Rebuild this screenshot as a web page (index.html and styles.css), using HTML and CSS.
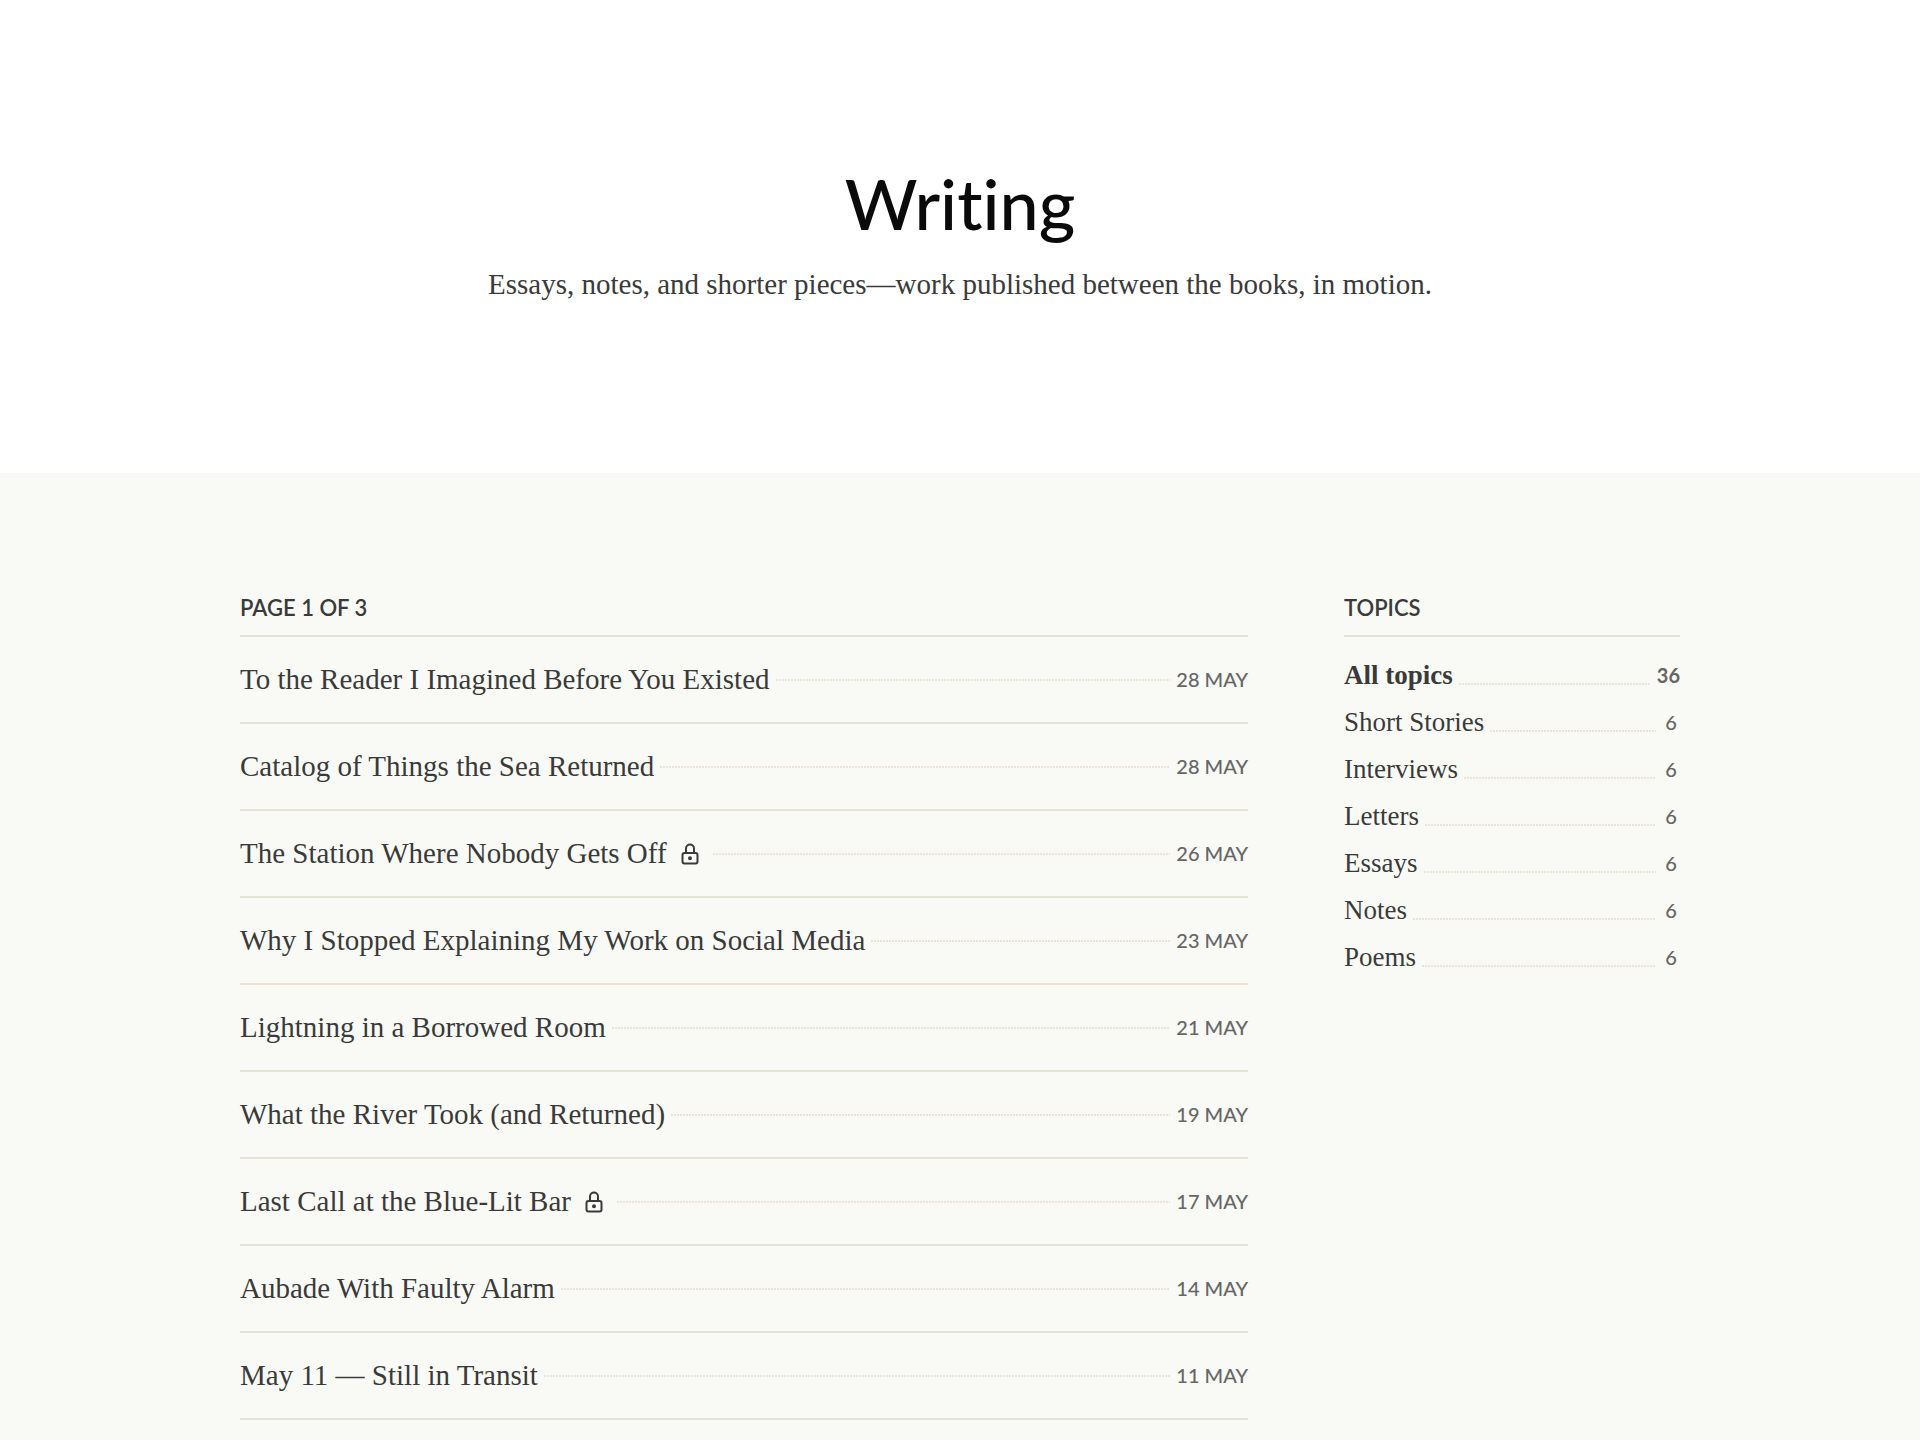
FILE: index.html
```
<!DOCTYPE html>
<html lang="en">
<head>
    <meta charset="UTF-8">
    <meta name="viewport" content="width=device-width, initial-scale=1.0">
    <title>Writing</title>
    <link rel="stylesheet" href="styles.css">
</head>
<body>

<!-- Lock icon, reused by members-only posts -->
<svg class="sprite" aria-hidden="true">
    <symbol id="lock" viewBox="0 0 18 22">
        <rect x="1.5" y="10" width="15" height="10.5" rx="2"/>
        <path d="M5 10V5.5a4 4 0 0 1 8 0V10"/>
        <circle cx="9" cy="15.2" r="1"/>
    </symbol>
</svg>

<header class="hero">
    <h1>Writing</h1>
    <p>Essays, notes, and shorter pieces—work published between the books, in motion.</p>
</header>

<div class="content">
    <div class="container">
        <main>
            <h2>Page 1 of 3</h2>
            <ul class="posts">
                <li><a href="#"><span class="name">To the Reader I Imagined Before You Existed</span><span class="dots"></span><time>28 May</time></a></li>
                <li><a href="#"><span class="name">Catalog of Things the Sea Returned</span><span class="dots"></span><time>28 May</time></a></li>
                <li><a href="#"><span class="name">The Station Where Nobody Gets Off</span><svg class="lock" role="img" aria-label="Members only"><use href="#lock"/></svg><span class="dots"></span><time>26 May</time></a></li>
                <li><a href="#"><span class="name">Why I Stopped Explaining My Work on Social Media</span><span class="dots"></span><time>23 May</time></a></li>
                <li><a href="#"><span class="name">Lightning in a Borrowed Room</span><span class="dots"></span><time>21 May</time></a></li>
                <li><a href="#"><span class="name">What the River Took (and Returned)</span><span class="dots"></span><time>19 May</time></a></li>
                <li><a href="#"><span class="name">Last Call at the Blue-Lit Bar</span><svg class="lock" role="img" aria-label="Members only"><use href="#lock"/></svg><span class="dots"></span><time>17 May</time></a></li>
                <li><a href="#"><span class="name">Aubade With Faulty Alarm</span><span class="dots"></span><time>14 May</time></a></li>
                <li><a href="#"><span class="name">May 11 — Still in Transit</span><span class="dots"></span><time>11 May</time></a></li>
            </ul>
        </main>

        <aside>
            <h2>Topics</h2>
            <ul class="topics">
                <li><a href="#" class="active"><span class="name">All topics</span><span class="dots"></span><span class="count">36</span></a></li>
                <li><a href="#"><span class="name">Short Stories</span><span class="dots"></span><span class="count">6</span></a></li>
                <li><a href="#"><span class="name">Interviews</span><span class="dots"></span><span class="count">6</span></a></li>
                <li><a href="#"><span class="name">Letters</span><span class="dots"></span><span class="count">6</span></a></li>
                <li><a href="#"><span class="name">Essays</span><span class="dots"></span><span class="count">6</span></a></li>
                <li><a href="#"><span class="name">Notes</span><span class="dots"></span><span class="count">6</span></a></li>
                <li><a href="#"><span class="name">Poems</span><span class="dots"></span><span class="count">6</span></a></li>
            </ul>
        </aside>
    </div>
</div>

</body>
</html>
```
FILE: styles.css
```
* {
    box-sizing: border-box;
}
body {
    margin: 0;
    font-family: "Liberation Serif", serif;
    font-size: 29px;
    line-height: 36px;
    background-color: #fff;
    color: #3a3a3a;
}
h1, h2, p, ul {
    margin: 0;
    padding: 0;
}
ul {
    list-style: none;
}
h1, h2, time, .count {
    font-family: Lato, sans-serif;
}
.sprite {
    display: none;
}

/* Page title */
.hero {
    padding: 158px 24px 171px;
    text-align: center;
}
h1 {
    font-size: 70px;
    font-weight: 500;
    line-height: 90px;
    font-variant-ligatures: none;
    color: #0a0a0a;
}
.hero p {
    margin-top: 18px;
}

/* List and sidebar */
.content {
    min-height: calc(100vh - 473px);
    padding: 121px 24px 0;
    background-color: #f9faf6;
}
.container {
    display: grid;
    grid-template-columns: 3fr 1fr;
    gap: 96px;
    max-width: 1440px;
    margin: 0 auto;
}
h2 {
    padding-bottom: 13px;
    border-bottom: 2px solid #e6e3d3;
    font-size: 22px;
    font-weight: 600;
    line-height: 28px;
    text-transform: uppercase;
}
li a {
    display: flex;
    align-items: center;
    gap: 6px;
    color: inherit;
    text-decoration: none;
}
.dots {
    flex: 1;
    height: 2px;
    background: repeating-linear-gradient(to right, #e9e6d9 0 2px, transparent 2px 3px);
}
.posts li {
    border-bottom: 2px solid #e6e3d3;
}
.posts a {
    height: 85px;
}
.posts .name,
.posts time {
    padding-bottom: 2px;
}
.lock {
    width: 18px;
    height: 22px;
    margin: 0 8px;
    fill: none;
    stroke: #3a3a3a;
    stroke-width: 2;
}
time, .count {
    font-size: 20px;
    font-weight: 500;
    color: #666;
    text-transform: uppercase;
}

/* Topics */
.topics {
    padding-top: 14px;
}
.topics a {
    height: 47px;
    font-size: 27px;
}
.topics .dots {
    margin-top: 18px;
}
.count {
    min-width: 18px;
    text-align: center;
}
.active, .active .count {
    font-weight: 700;
}
```
